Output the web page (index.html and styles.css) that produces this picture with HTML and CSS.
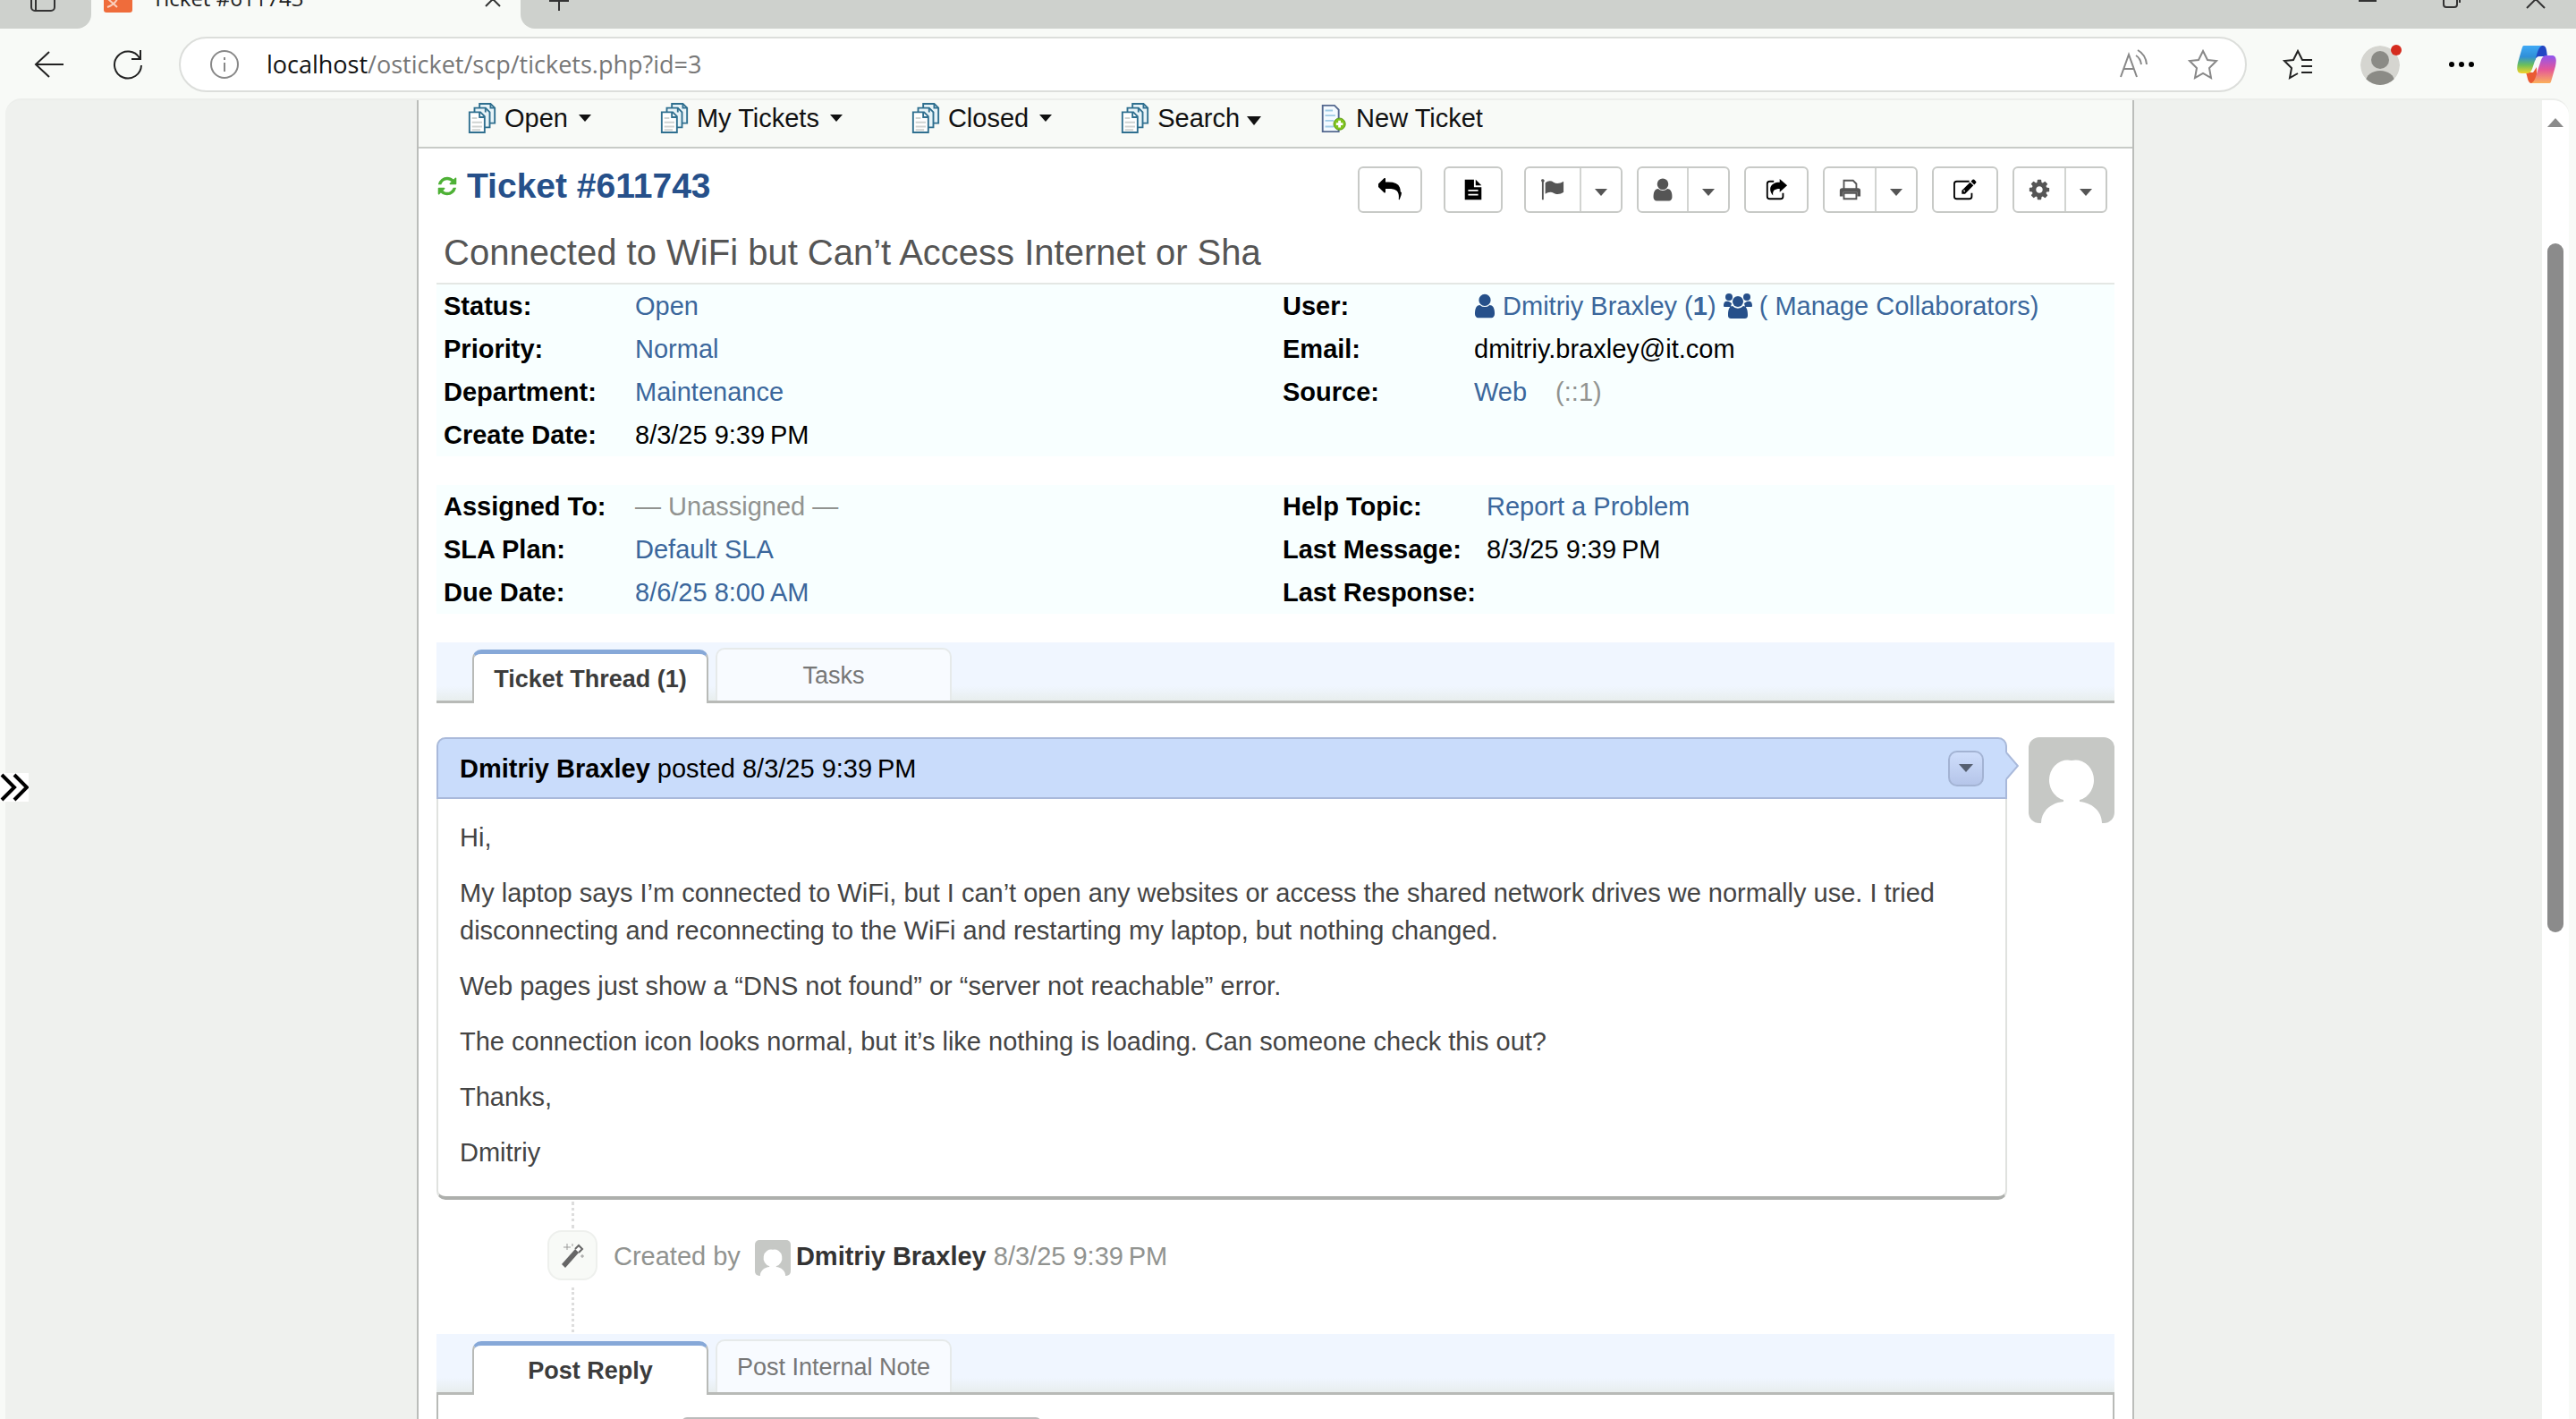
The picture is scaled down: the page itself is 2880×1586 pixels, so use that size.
FILE: index.html
```html
<!DOCTYPE html>
<html lang="en">
<head>
<meta charset="utf-8">
<title>Ticket #611743</title>
<link rel="stylesheet" href="styles.css">
</head>
<body>
<svg class="defs" aria-hidden="true">
  <symbol id="i-queue" viewBox="0 0 32 36">
    <g fill="#e8f4f8" stroke="#2f6f8f" stroke-width="2">
      <path d="M13 1h13l5 5v18H13z"/><path d="M7 6h13l5 5v18H7z"/><path fill="#fff" d="M1 11h13l5 5v19H1z"/>
      <path fill="none" d="M13 11v6h6M20 6v5M26 1v5h5"/>
    </g>
    <path stroke="#cfd3d1" stroke-width="2" d="M4 18h6M4 23h12M4 28h12M4 32h10"/>
  </symbol>
  <symbol id="i-new" viewBox="0 0 30 36">
    <path d="M2 3h14l5 5v26H2z" fill="#f4faff" stroke="#54688f" stroke-width="2"/>
    <path d="M5 9h9M5 15h12M5 21h10M5 28h10" stroke="#9fcbe6" stroke-width="2"/>
    <circle cx="22" cy="25" r="7" fill="#7fc31c" stroke="#5c9a17"/><path d="M22 21v8M18 25h8" stroke="#fff" stroke-width="3"/>
  </symbol>
  <symbol id="i-refresh" viewBox="0 0 1792 1792"><path d="M1639 1056q0 5-1 7-64 268-268 434.500t-478 166.500q-146 0-282.500-55t-243.500-157l-129 129q-19 19-45 19t-45-19-19-45v-448q0-26 19-45t45-19h448q26 0 45 19t19 45-19 45l-137 137q71 66 161 102t187 36q134 0 250-65t186-179q11-17 53-117 8-23 30-23h192q13 0 22.500 9.500t9.500 22.500zm25-800v448q0 26-19 45t-45 19h-448q-26 0-45-19t-19-45 19-45l138-138q-148-137-349-137-134 0-250 65t-186 179q-11 17-53 117-8 23-30 23h-199q-13 0-22.500-9.500t-9.500-22.500v-7q65-268 270-434.500t480-166.500q146 0 284 55.500t245 156.500l130-129q19-19 45-19t45 19 19 45z"/></symbol>
  <symbol id="i-reply" viewBox="0 0 1792 1792"><path d="M1792 1120q0 166-127 451-3 7-10.500 24t-13.500 30-13 22q-12 17-28 17-15 0-23.500-10t-8.500-25q0-9 2.500-26.500t2.500-23.500q5-68 5-123 0-112-19.500-200.500t-54-153.500-88-112-115-78.500-147.500-51-172.500-27-206.500-8.500h-224v256q0 26-19 45t-45 19-45-19l-512-512q-19-19-19-45t19-45l512-512q19-19 45-19t45 19 19 45v256h224q713 0 875 403 53 134 53 333z"/></symbol>
  <symbol id="i-user" viewBox="200 100 1392 1592"><path d="M1536 1399q0 109-62.500 187t-150.500 78h-854q-88 0-150.500-78t-62.500-187q0-85 8.500-160.500t31.500-152 58.500-131 94-89 134.500-34.500q131 128 313 128t313-128q76 0 134.500 34.500t94 89 58.500 131 31.500 152 8.500 160.500zm-256-887q0 159-112.500 271.500t-271.500 112.500-271.500-112.500-112.500-271.500 112.500-271.500 271.500-112.500 271.500 112.500 112.500 271.500z"/></symbol>
  <symbol id="i-gear" viewBox="0 0 1792 1792"><path d="M1152 896q0-106-75-181t-181-75-181 75-75 181 75 181 181 75 181-75 75-181zm512-109v222q0 12-8 23t-20 13l-185 28q-19 54-39 91 35 50 107 138 10 12 10 25t-9 23q-27 37-99 108t-94 71q-12 0-26-9l-138-108q-44 23-91 38-16 136-29 186-7 28-36 28h-222q-14 0-24.500-8.500t-11.500-21.500l-28-184q-49-16-90-37l-141 107q-10 9-25 9-14 0-25-11-126-114-165-168-7-10-7-23 0-12 8-23 15-21 51-66.500t54-70.500q-27-50-41-99l-183-27q-13-2-21-12.500t-8-23.500v-222q0-12 8-23t19-13l186-28q14-46 39-92-40-57-107-138-10-12-10-24 0-10 9-23 26-36 98.500-107.500t94.500-71.500q13 0 26 10l138 107q44-23 91-38 16-136 29-186 7-28 36-28h222q14 0 24.500 8.500t11.500 21.500l28 184q49 16 90 37l142-107q9-9 24-9 13 0 25 10 129 119 165 170 7 8 7 22 0 12-8 23-15 21-51 66.500t-54 70.500q26 50 41 98l183 28q13 2 21 12.500t8 23.500z"/></symbol>
  <symbol id="i-doc" viewBox="0 0 28 28"><path fill-rule="evenodd" d="M4 2h11v9h9v15H4zM17 2l7 7h-7zM8 14v2h12v-2zM8 19v2h12v-2z"/></symbol>
  <symbol id="i-flag" viewBox="0 0 28 28"><path d="M0 3a2 2 0 1 1 3 2v21H1V5zM5 6c3-3 7-3 10-1s7 2 12-1v13c-4 3-9 3-12 1s-7-1-10 1z"/></symbol>
  <symbol id="i-share" viewBox="0 0 28 28"><path d="M22 18v4a3 3 0 0 1-3 3H6a3 3 0 0 1-3-3V7a3 3 0 0 1 3-3h5" fill="none" stroke="currentColor" stroke-width="2"/><path d="M18 1l9 8-9 8v-4c-6 0-9 2-8 8-6-7-4-16 8-16z"/></symbol>
  <symbol id="i-print" viewBox="0 0 28 28"><path d="M7 13V3h11l4 4v6M7 18h15v7H7z" fill="none" stroke="currentColor" stroke-width="2"/><path fill-rule="evenodd" d="M5 12h19a3 3 0 0 1 3 3v7h-4v-5H6v5H2v-7a3 3 0 0 1 3-3z"/></symbol>
  <symbol id="i-edit" viewBox="0 0 28 28"><path d="M22 18v4a3 3 0 0 1-3 3H4a3 3 0 0 1-3-3V7a3 3 0 0 1 3-3h15" fill="none" stroke="currentColor" stroke-width="2"/><path fill-rule="evenodd" d="M10 15L20 5l4 4-10 10h-4zM21 4l2-2q1-1 2 0l2 2q1 1 0 2l-2 2zM12 15l1 2 1-1-1-2z"/></symbol>
  <symbol id="i-users" viewBox="0 0 32 28"><circle cx="6" cy="4" r="4"/><circle cx="26" cy="4" r="4"/><path d="M0 14c0-5 2-6 6-5l3 2-1 4H2c-1 0-2 0-2-1zM32 14c0-5-2-6-6-5l-3 2 1 4h6c1 0 2 0 2-1z"/><circle cx="16" cy="9" r="6"/><path d="M5 24c0-7 2-10 5-10a8 8 0 0 0 12 0c3 0 5 3 5 10 0 3-1 4-4 4H9c-3 0-4-1-4-4z"/></symbol>
  <symbol id="i-avatar" viewBox="0 0 96 96"><rect width="96" height="96" rx="12" fill="#c6c8c5"/><path fill="#fff" d="M48 26a20 22 0 0 1 9 44v2c13 1 25 10 25 24H14c0-14 12-23 25-24v-2a20 22 0 0 1 9-44z"/></symbol>
</svg>

<header class="browser">
  <div class="tabstrip">
    <div class="tab-actions"><svg viewBox="0 0 30 30"><rect x="2" y="2" width="26" height="26" rx="4"/><path d="M7 2v26"/></svg></div>
    <div class="browser-tab">
      <svg class="favicon" viewBox="0 0 32 32"><rect width="32" height="32" rx="3" fill="#ef6c3b"/><path d="M4 26C10 24 14 20 16 15M5 17l10 9" stroke="#fbd0bd" stroke-width="2" fill="none"/></svg>
      <span class="tab-title">Ticket #611743</span>
      <button class="bare" aria-label="Close tab"><svg class="x" viewBox="0 0 18 18"><path d="M1 1l16 16M17 1L1 17"/></svg></button>
    </div>
    <div class="strip-rest">
      <button class="bare plus" aria-label="New tab"><svg class="x" viewBox="0 0 22 22"><path d="M11 0v22M0 11h22"/></svg></button>
      <div class="win">
        <svg class="min" viewBox="0 0 20 22"><path d="M0 11h20"/></svg>
        <svg class="x" viewBox="0 0 22 22"><rect x="2" y="4" width="15" height="16" rx="3"/><path d="M6 1h10a4 4 0 0 1 4 4v10"/></svg>
        <svg class="x" viewBox="0 0 22 22"><path d="M1 1l20 20M21 1L1 21"/></svg>
      </div>
    </div>
  </div>
  <div class="toolbar">
    <button class="bare" aria-label="Back"><svg class="line" viewBox="0 0 34 34"><path d="M33 17H2M17 3L2 17l15 14"/></svg></button>
    <button class="bare" aria-label="Refresh"><svg class="line" viewBox="0 0 34 34"><path d="M30 10A15 15 0 1 0 32 18M31 1v10H21"/></svg></button>
    <div class="address">
      <svg class="info" viewBox="0 0 34 34"><circle cx="17" cy="17" r="15"/><path d="M17 15v10M17 9v3"/></svg>
      <a class="url" href="#"><span>localhost</span>/osticket/scp/tickets.php?id=3</a>
      <svg class="gray" viewBox="0 0 34 34"><path d="M3 31L12 6l9 25M6 22h12M20 7q5 3 6 10M22 1q9 5 10 16"/></svg>
      <svg class="gray" viewBox="0 0 34 34"><path d="M17 2l5 10 10 1-8 8 2 11-9-5-9 5 2-11-8-8 10-1z"/></svg>
    </div>
    <svg class="line" viewBox="0 0 34 34"><path d="M17 27l-9 5 2-11-8-8 10-1 5-10 5 10h11M21 19h12M21 26h12"/></svg>
    <svg class="profile" viewBox="0 0 48 48"><defs><clipPath id="pc"><circle cx="23" cy="25" r="22"/></clipPath></defs><g clip-path="url(#pc)"><circle cx="23" cy="25" r="22" fill="#d5d5d0"/><circle cx="23" cy="19" r="10" fill="#8b8b86"/><ellipse cx="23" cy="43" rx="16" ry="12" fill="#8b8b86"/></g><circle cx="41" cy="8" r="6" fill="#d52b1e"/></svg>
    <svg class="dots" viewBox="0 0 28 28"><circle cx="3" cy="14" r="3"/><circle cx="14" cy="14" r="3"/><circle cx="25" cy="14" r="3"/></svg>
    <svg class="copilot" viewBox="0 0 44 44">
      <defs><linearGradient id="c1" x2="0" y2="1"><stop stop-color="#3fa9f5"/><stop offset=".4" stop-color="#2f8fd8"/><stop offset=".7" stop-color="#6cc05a"/><stop offset="1" stop-color="#f6d22a"/></linearGradient><linearGradient id="c2" x2="0" y2="1"><stop stop-color="#8f55f0"/><stop offset=".5" stop-color="#e4569a"/><stop offset="1" stop-color="#fbb05a"/></linearGradient></defs>
      <path fill="#2247c4" d="M20 1h9c4 0 4 5 5 12h-8c-4 0-5 2-6 5z"/><path fill="#ea5a33" d="M10 31h8l4-6v18h-6c-4 0-4-7-6-12z"/>
      <path fill="url(#c1)" d="M8 1h20c-4 2-5 7-7 14l-4 12c-1 3-3 5-6 5H5c-6 0-5-7-4-12L5 6c1-3 1-5 3-5z"/><path fill="url(#c2)" d="M36 43H16c4-2 5-7 7-14l4-12c1-3 3-5 6-5h6c6 0 5 7 4 12l-4 14c-1 3-1 5-3 5z"/></svg>
  </div>
</header>

<div class="viewport">
  <svg class="drawer" viewBox="0 0 32 32"><path d="M2 2l14 14L2 30M16 2l14 14-14 14"/></svg>
  <main class="page">
    <nav class="subnav">
      <a href="#"><svg class="q"><use href="#i-queue"/></svg>Open<i class="caret"></i></a>
      <a href="#"><svg class="q"><use href="#i-queue"/></svg>My Tickets<i class="caret"></i></a>
      <a href="#"><svg class="q"><use href="#i-queue"/></svg>Closed<i class="caret"></i></a>
      <a class="search" href="#"><svg class="q"><use href="#i-queue"/></svg>Search<i class="caret big"></i></a>
      <a href="#"><svg class="q"><use href="#i-new"/></svg>New Ticket</a>
    </nav>
    <div class="content">
      <div class="head">
        <h2><a href="#"><svg class="refresh"><use href="#i-refresh"/></svg>Ticket #611743</a></h2>
        <div class="actions">
          <button class="btn w72" aria-label="Reply"><svg><use href="#i-reply"/></svg></button>
          <button class="btn w66" aria-label="Internal note"><svg><use href="#i-doc"/></svg></button>
          <button class="btn split" aria-label="Change status"><span class="w60"><svg><use href="#i-flag"/></svg></span><span class="drop"><i class="caret"></i></span></button>
          <button class="btn split near" aria-label="Assign"><span class="w54"><svg><use href="#i-user"/></svg></span><span class="drop"><i class="caret"></i></span></button>
          <button class="btn w72 near" aria-label="Transfer"><svg><use href="#i-share"/></svg></button>
          <button class="btn split near" aria-label="Print"><span class="w56"><svg><use href="#i-print"/></svg></span><span class="drop"><i class="caret"></i></span></button>
          <button class="btn w74 near" aria-label="Edit"><svg><use href="#i-edit"/></svg></button>
          <button class="btn split near" aria-label="More"><span class="w56"><svg><use href="#i-gear"/></svg></span><span class="drop"><i class="caret"></i></span></button>
        </div>
      </div>
      <h3 class="subject">Connected to WiFi but Can’t Access Internet or Sha</h3>
      <div class="info-grid">
        <table>
          <tr><th>Status:</th><td><a href="#">Open</a></td></tr>
          <tr><th>Priority:</th><td><a href="#">Normal</a></td></tr>
          <tr><th>Department:</th><td><a href="#">Maintenance</a></td></tr>
          <tr><th>Create Date:</th><td>8/3/25 9:39&#8239;PM</td></tr>
        </table>
        <table>
          <tr><th>User:</th><td><a href="#"><svg class="ic"><use href="#i-user"/></svg> Dmitriy Braxley (<b>1</b>)</a> <a href="#"><svg class="ic wide"><use href="#i-users"/></svg> ( Manage Collaborators)</a></td></tr>
          <tr><th>Email:</th><td>dmitriy.braxley@it.com</td></tr>
          <tr><th>Source:</th><td><a href="#">Web</a><span class="faded ip">(::1)</span></td></tr>
        </table>
      </div>
      <div class="info-grid second">
        <table>
          <tr><th>Assigned To:</th><td class="faded">— Unassigned —</td></tr>
          <tr><th>SLA Plan:</th><td><a href="#">Default SLA</a></td></tr>
          <tr><th>Due Date:</th><td><a href="#">8/6/25 8:00&#8239;AM</a></td></tr>
        </table>
        <table class="wide-label">
          <tr><th>Help Topic:</th><td><a href="#">Report a Problem</a></td></tr>
          <tr><th>Last Message:</th><td>8/3/25 9:39&#8239;PM</td></tr>
          <tr><th>Last Response:</th><td></td></tr>
        </table>
      </div>
      <div class="tabs"><a class="active" href="#">Ticket Thread (1)</a><a href="#">Tasks</a></div>
      <div class="thread">
        <article class="entry">
          <header><span><b>Dmitriy Braxley</b> posted 8/3/25 9:39&#8239;PM</span><button class="menu" aria-label="Entry menu"><i class="caret"></i></button>
            <svg class="pointer" viewBox="0 0 16 30"><path d="M0 0h2l13 15L2 30H0z" fill="#c9dcfb"/><path d="M2 0l13 15L2 30" fill="none" stroke="#a9b9da" stroke-width="2"/></svg></header>
          <div class="body">
            <p>Hi,</p>
            <p>My laptop says I’m connected to WiFi, but I can’t open any websites or access the shared network drives we normally use. I tried disconnecting and reconnecting to the WiFi and restarting my laptop, but nothing changed.</p>
            <p>Web pages just show a “DNS not found” or “server not reachable” error.</p>
            <p>The connection icon looks normal, but it’s like nothing is loading. Can someone check this out?</p>
            <p>Thanks,</p>
            <p>Dmitriy</p>
          </div>
        </article>
        <svg class="avatar"><use href="#i-avatar"/></svg>
      </div>
      <div class="event">
        <div class="rail"><span class="stub"></span><span class="badge"><svg viewBox="0 0 28 28"><path fill="#666" d="M2 24L18 6l4 4L6 28z"/><path d="M17 7l4-4 4 4-4 4" fill="#fff" stroke="#666" stroke-width="2"/><path d="M8 1v7M4 5h8M14 1v3M25 13v4M23 15h4" stroke="#999" stroke-width="1"/></svg></span><span class="stub long"></span></div>
        <p>Created by <svg class="mini"><use href="#i-avatar"/></svg><b>Dmitriy Braxley</b> 8/3/25 9:39&#8239;PM</p>
      </div>
      <div class="tabs"><a class="active" href="#">Post Reply</a><a href="#">Post Internal Note</a></div>
      <form class="reply"><select aria-label="From"><option>support</option></select></form>
    </div>
  </main>
  <div class="scrollbar"><i class="up"></i><i class="thumb"></i></div>
</div>
</body>
</html>
```
FILE: styles.css
```css
* { box-sizing: border-box; }
body { margin: 0; height: 100vh; overflow: hidden; display: flex; flex-direction: column; background: #f8faf7; font: 29px/48px "Liberation Sans", Arial, sans-serif; color: #000; }
a { color: #3b679c; text-decoration: none; }
h2, h3, p { margin: 0; }
button { font: inherit; color: inherit; padding: 0; cursor: pointer; }
.defs { position: absolute; width: 0; height: 0; }
.bare { border: 0; background: none; display: flex; }
i { display: inline-block; }

/* browser frame */
.browser { flex: none; }
.tabstrip { display: flex; height: 32px; background: #f8faf7; }
.tabstrip > * { display: flex; align-items: flex-end; }
.tabstrip svg { fill: none; stroke: #333; stroke-width: 2; flex: none; }
.tab-actions { width: 102px; padding: 0 0 18px 33px; background: #ced1cd; border-radius: 0 0 16px 0; }
.tab-actions svg { width: 30px; height: 30px; }
.browser-tab { width: 480px; padding: 0 22px 0 14px; }
.tabstrip .favicon { width: 32px; height: 32px; margin-bottom: 18px; stroke: none; }
.tab-title { flex: 1; margin: 0 0 18px 22px; font: 24px/32px "Open Sans", "Noto Sans", sans-serif; color: #222; }
.x { width: 18px; height: 18px; margin-bottom: 24px; }
.strip-rest { flex: 1; justify-content: space-between; background: #ced1cd; border-radius: 0 0 0 16px; padding: 0 34px 0 32px; }
.plus .x { width: 22px; height: 22px; margin-bottom: 20px; }
.win { display: flex; align-items: flex-end; gap: 72px; }
.win .x, .win .min { width: 22px; height: 22px; margin-bottom: 22px; }
.win .min { margin-bottom: 20px; }
.toolbar { display: flex; align-items: center; height: 78px; padding: 1px 22px 0 38px; }
.toolbar svg { flex: none; width: 34px; height: 34px; }
.line { fill: none; stroke: #222; stroke-width: 2; }
.toolbar .bare + .bare { margin-left: 54px; }
.address { flex: 1; display: flex; align-items: center; height: 62px; margin: 0 40px; padding: 0 30px 0 32px; border: 2px solid #dcdedb; border-radius: 31px; background: #fff; }
.info, .gray { fill: none; stroke: #888; stroke-width: 2; }
.url { flex: 1; margin-left: 30px; font: 27px/40px "Open Sans", "Noto Sans", sans-serif; color: #777; }
.url span { color: #111; }
.gray + .gray { margin-left: 44px; }
.toolbar .profile { width: 48px; height: 48px; margin-left: 52px; }
.toolbar .dots { width: 28px; height: 28px; margin: 0 48px 0 52px; }
.toolbar .copilot { width: 44px; height: 50px; }

/* page viewport */
.viewport { flex: 1; min-height: 0; display: flex; margin: 0 8px 0 6px; padding-left: 4px; overflow: hidden; background: #eff1ee; border-radius: 18px 18px 0 0; border-top: 2px solid #eceeeb; }
.page { flex: 0 1 1920px; margin: 0 auto; border: solid #bbbdba; border-width: 0 2px; background: #fff; align-self: flex-start; }
.drawer { position: absolute; left: 0; top: 864px; width: 32px; height: 32px; background: #fff; fill: none; stroke: #000; stroke-width: 4; }
.scrollbar { flex: none; width: 30px; background: #fff; display: flex; flex-direction: column; align-items: center; padding-top: 20px; }
.up { border: solid transparent; border-width: 0 9px 10px; border-bottom-color: #8b8b8b; }
.thumb { width: 18px; height: 770px; margin-top: 130px; border-radius: 9px; background: #8b8b8b; }

.subnav { display: flex; gap: 76px; height: 54px; padding: 0 54px; background: #f8faf7; border-bottom: 2px solid #c8cbc7; line-height: 40px; }
.subnav a { display: flex; align-items: center; height: 40px; color: #111; white-space: nowrap; }
.subnav .search { margin-right: -12px; }
.q { width: 34px; height: 34px; margin-right: 8px; }
.caret { border: solid transparent; border-width: 8px 7px 0; border-top-color: currentColor; }
.subnav .caret { margin-left: 12px; }
.subnav .big { border-width: 10px 8px 0; margin: 6px 0 0 8px; }

.content { padding: 20px 20px 0; }
.head { display: flex; justify-content: space-between; align-items: center; height: 52px; padding-right: 8px; }
h2 { font-size: 39px; line-height: 52px; margin-top: -8px; }
h2 a { display: flex; align-items: center; color: #26508a; }
.refresh { width: 24px; height: 24px; margin-right: 10px; fill: #4eb136; }
.actions { display: flex; gap: 24px; }
.near { margin-left: -8px; }
.btn { display: flex; align-items: stretch; justify-content: center; height: 52px; background: #fff; border: 2px solid #c8cac7; border-radius: 6px; color: #000; }
.btn svg { width: 26px; height: 26px; fill: currentColor; margin: auto; }
.w72 { width: 72px; } .w66 { width: 66px; } .w74 { width: 74px; } .w60 { width: 60px; } .w56 { width: 56px; } .w54 { width: 54px; }
.split { color: #555; }
.split span { display: flex; align-items: center; }
.split .drop { width: 46px; justify-content: center; border-left: 2px solid #d2d4d1; padding-top: 6px; }
.subject { margin-top: 22px; padding: 0 8px 12px; font-size: 40px; line-height: 44px; font-weight: 400; color: #555; border-bottom: 2px solid #e4e7e4; }
.info-grid { display: grid; grid-template-columns: 1fr 1fr; align-items: start; background: #f8ffff; }
.second { margin-top: 32px; }
table { border-collapse: collapse; margin-left: 8px; }
th, td { padding: 0; height: 48px; white-space: nowrap; text-align: left; }
th { width: 214px; }
.wide-label th { width: 228px; }
.faded { color: #919390; }
.ip { margin-left: 32px; }
.ic { width: 24px; height: 28px; fill: #26508a; vertical-align: -4px; }
.wide { width: 32px; }

.tabs { display: flex; align-items: flex-end; gap: 8px; height: 68px; margin-top: 32px; padding-left: 40px; background: linear-gradient(#f0f6ff 0 75%, #e8eeee); border-bottom: 3px solid #b8bab7; font-size: 27px; }
.tabs a { width: 264px; height: 59px; text-align: center; line-height: 58px; color: #777; background: #f8fbff; border: 2px solid #e6eaea; border-bottom: 0; border-radius: 10px 10px 0 0; }
.tabs .active { margin-bottom: -3px; height: 60px; line-height: 56px; font-weight: 700; color: #3c3c3c; background: #fff; border-color: #b8bab7; border-top: 5px solid #86a8d8; }
.thread { display: flex; justify-content: space-between; gap: 24px; margin-top: 38px; }
.avatar { flex: none; width: 96px; height: 96px; }
.entry { flex: 1; border: 2px solid #e0e2df; border-top: 0; border-bottom: 4px solid #adafac; border-radius: 10px; }
.entry header { position: relative; display: flex; align-items: center; justify-content: space-between; height: 69px; margin: 0 -2px; padding: 0 24px; background: #c9dcfb; border: 2px solid #a9b9da; border-radius: 10px 10px 0 0; }
.pointer { position: absolute; left: calc(100% - 1px); top: 15px; width: 16px; height: 30px; }
.menu { display: flex; align-items: center; justify-content: center; width: 40px; height: 40px; border: 2px solid #a3b3d3; border-radius: 10px; background: linear-gradient(#cfdefb, #b5c5e9); color: #555f70; }
.menu .caret { border-width: 9px 8px 0; }
.body { padding: 22px 24px 28px; color: #444; line-height: 42px; }
.body p + p { margin-top: 20px; }
.event { display: flex; height: 150px; padding-left: 124px; color: #919390; }
.event .rail { display: flex; flex-direction: column; align-items: center; width: 56px; margin-right: 18px; }
.event p { margin-top: 39px; }
.event b { color: #333; }
.stub { height: 30px; border-left: 3px dotted #ddd; margin: 2px 0; }
.long { flex: 1; margin-top: 8px; }
.badge { display: flex; width: 56px; height: 56px; flex: none; background: #f8faf7; border: 2px solid #eef0ed; border-radius: 16px; }
.badge svg { width: 28px; height: 28px; margin: auto; }
.mini { width: 40px; height: 40px; margin: 0 6px 0 8px; vertical-align: -12px; }
.event + .tabs { margin-top: 0; }
.reply { border: 2px solid #b8bab7; border-top: 0; padding: 25px 0 0 272px; height: 120px; }
.reply select { width: 402px; height: 50px; border: 2px solid #bbb; border-radius: 6px; background: #fff; font: inherit; }
```
